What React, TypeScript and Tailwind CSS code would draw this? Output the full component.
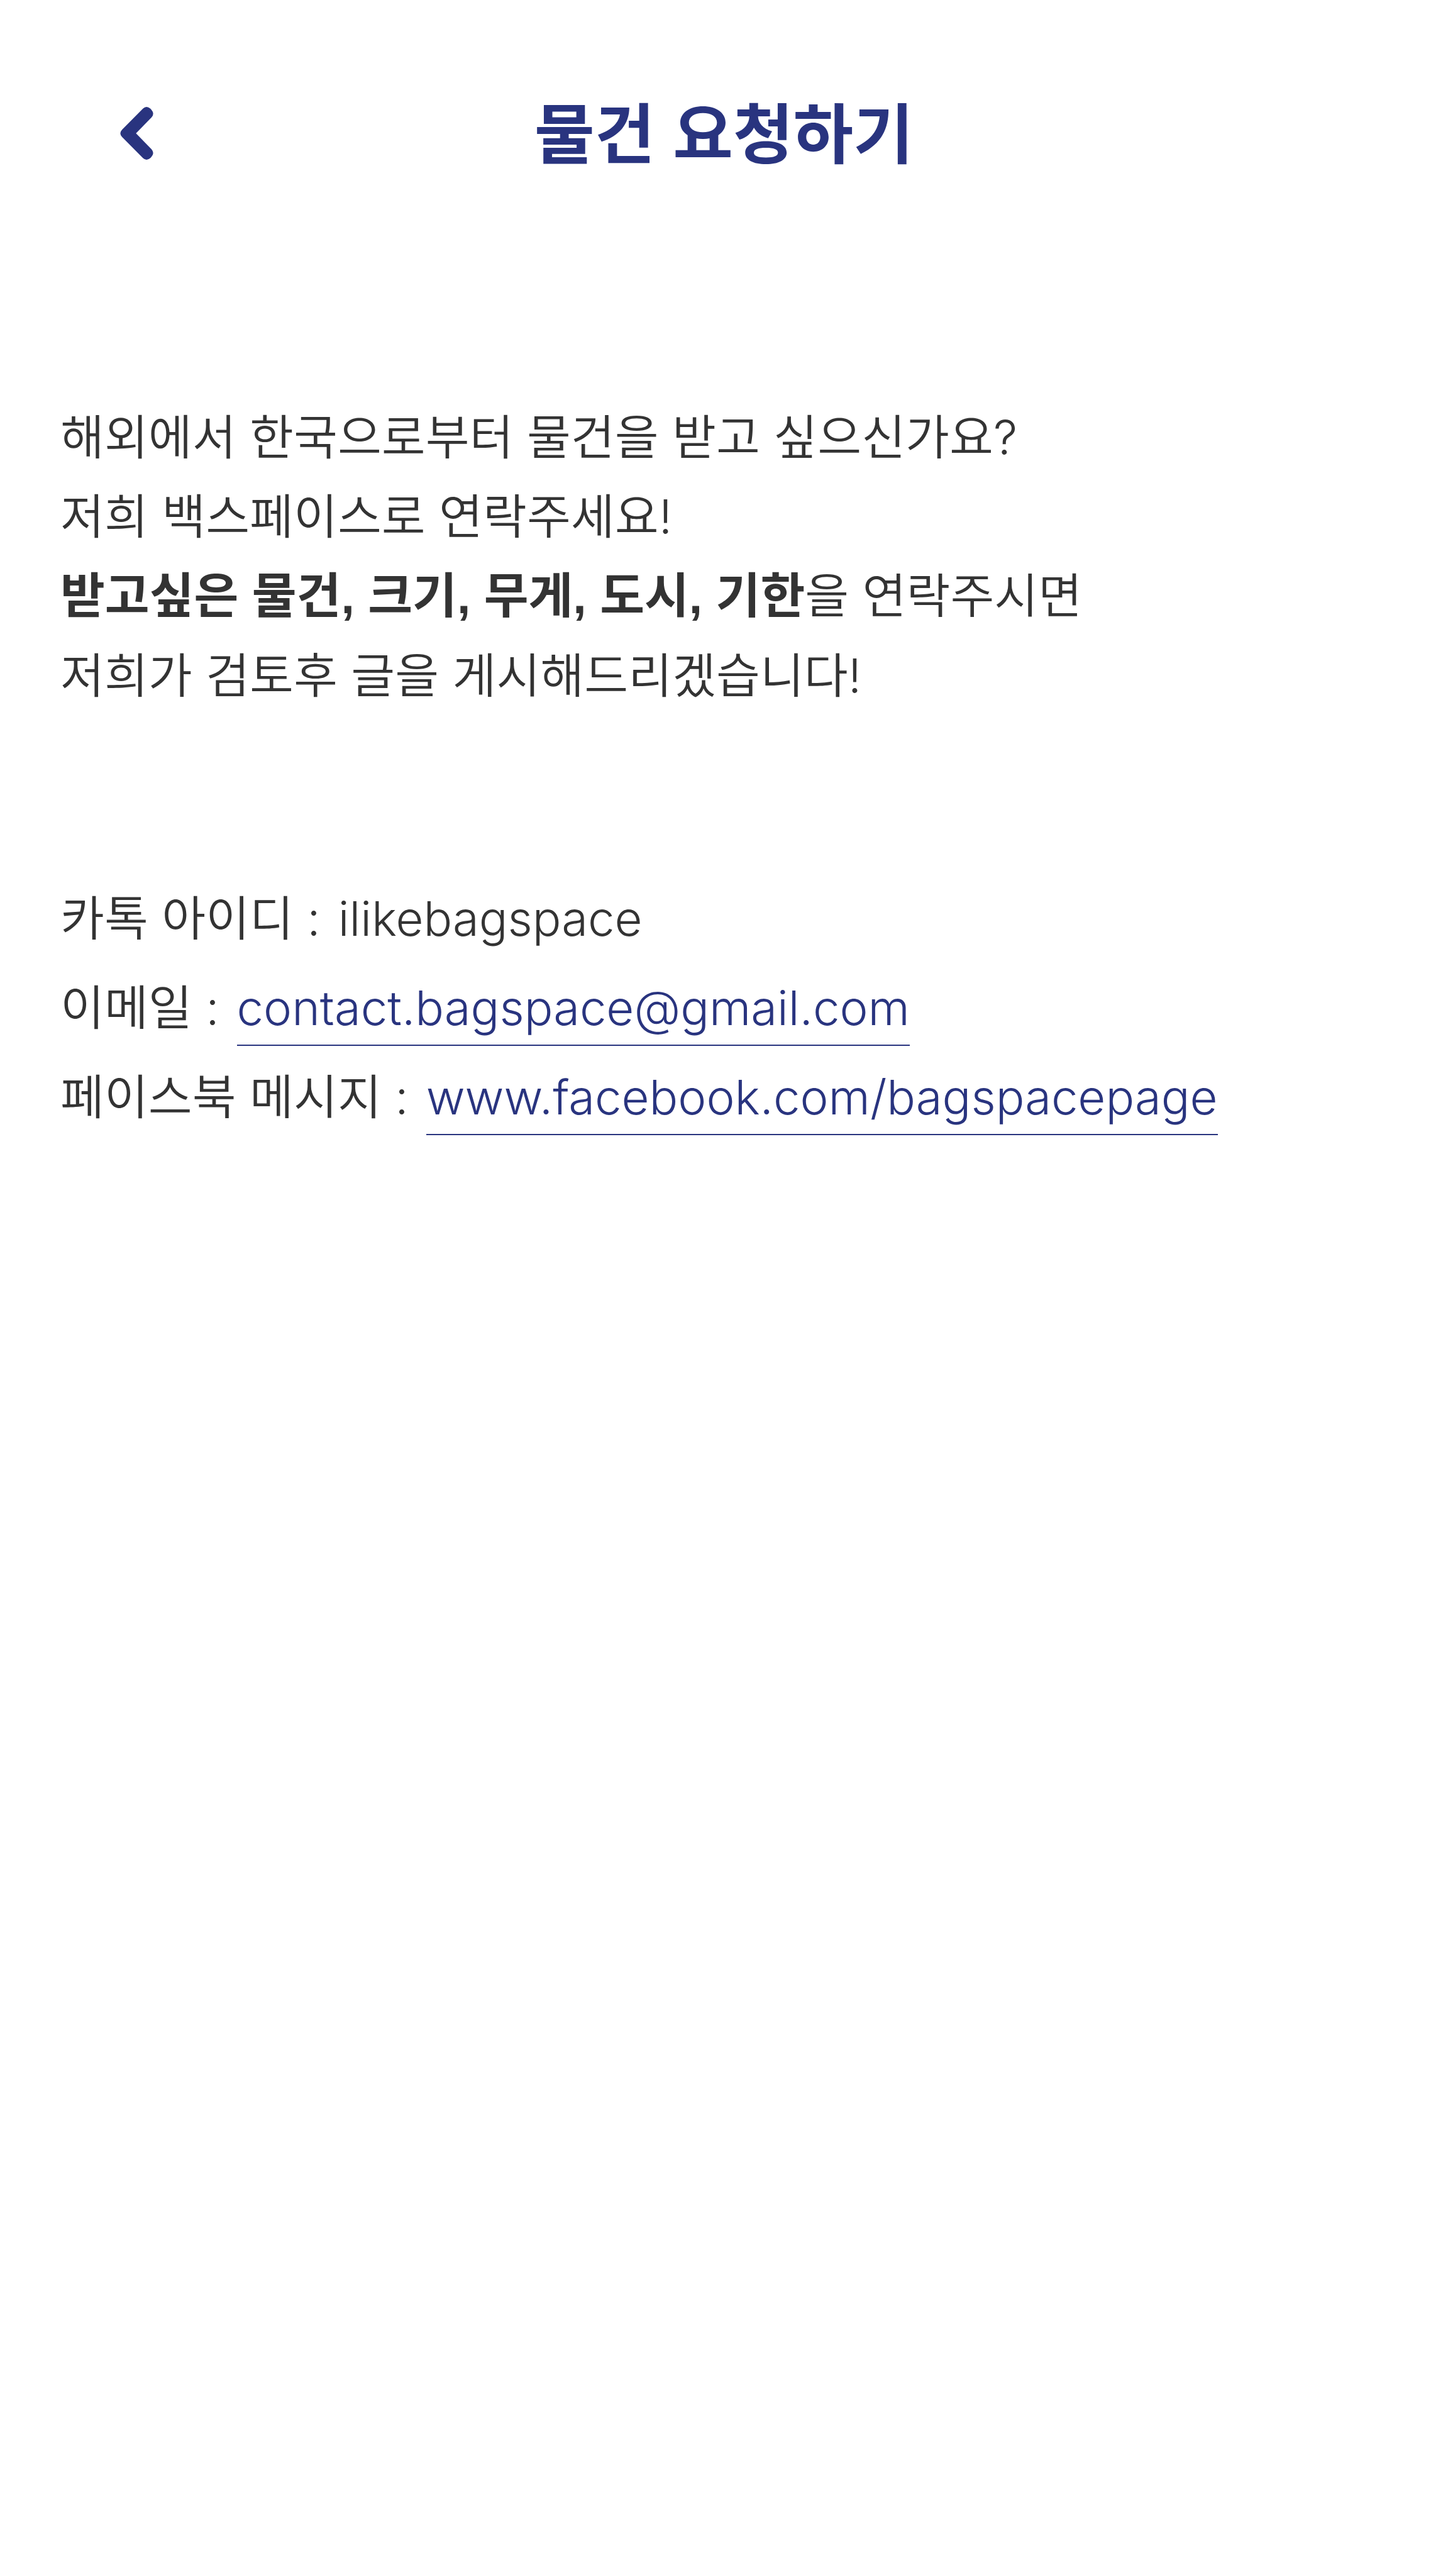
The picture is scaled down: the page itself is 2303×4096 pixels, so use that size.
const row = "flex h-[142px] items-start gap-7";
const link = "h-[132px] border-b-2 border-[#29347f] text-[#29347f]";

function BackIcon() {
  return (
    <svg viewBox="178 151 214 344" className="h-[84px] w-[53px]" fill="currentColor" aria-hidden="true">
      <path d="M280 323 L381 220 Q403 195 381 170 L374 162 Q348 140 325 162 L190 298 Q166 323 190 348 L325 484 Q348 506 374 484 L381 476 Q403 451 381 426 Z" />
    </svg>
  );
}

export default function App() {
  return (
    <div className="min-h-screen bg-white font-[Inter,'Noto_Sans_CJK_KR',sans-serif] text-[#333333]">
      <header className="grid h-[424px] grid-cols-[1fr_auto_1fr] items-center px-[191px] text-[#29347f]">
        <button type="button" aria-label="뒤로" className="justify-self-start">
          <BackIcon />
        </button>
        <h1 className="pt-2 font-['Liberation_Sans','Noto_Sans_CJK_KR',sans-serif] text-[104px] font-bold">
          물건 요청하기
        </h1>
      </header>
      <main className="px-24 pt-[208px] text-[76px] font-[350]">
        <p className="leading-[126px]">
          해외에서 한국으로부터 물건을 받고 싶으신가요?
          <br />
          저희 백스페이스로 연락주세요!
          <br />
          <strong className="font-['Liberation_Sans','Noto_Sans_CJK_KR',sans-serif] text-[77px] font-bold">
            받고싶은 물건, 크기, 무게, 도시, 기한
          </strong>
          을 연락주시면
          <br />
          저희가 검토후 글을 게시해드리겠습니다!
        </p>
        <ul className="mt-[252px] leading-[142px]">
          <li className={row}>
            <span>카톡 아이디 :</span>
            <span>ilikebagspace</span>
          </li>
          <li className={row}>
            <span>이메일 :</span>
            <a className={link} href="mailto:contact.bagspace@gmail.com">
              contact.bagspace@gmail.com
            </a>
          </li>
          <li className={row}>
            <span>페이스북 메시지 :</span>
            <a className={link} href="https://www.facebook.com/bagspacepage">
              www.facebook.com/bagspacepage
            </a>
          </li>
        </ul>
      </main>
    </div>
  );
}
